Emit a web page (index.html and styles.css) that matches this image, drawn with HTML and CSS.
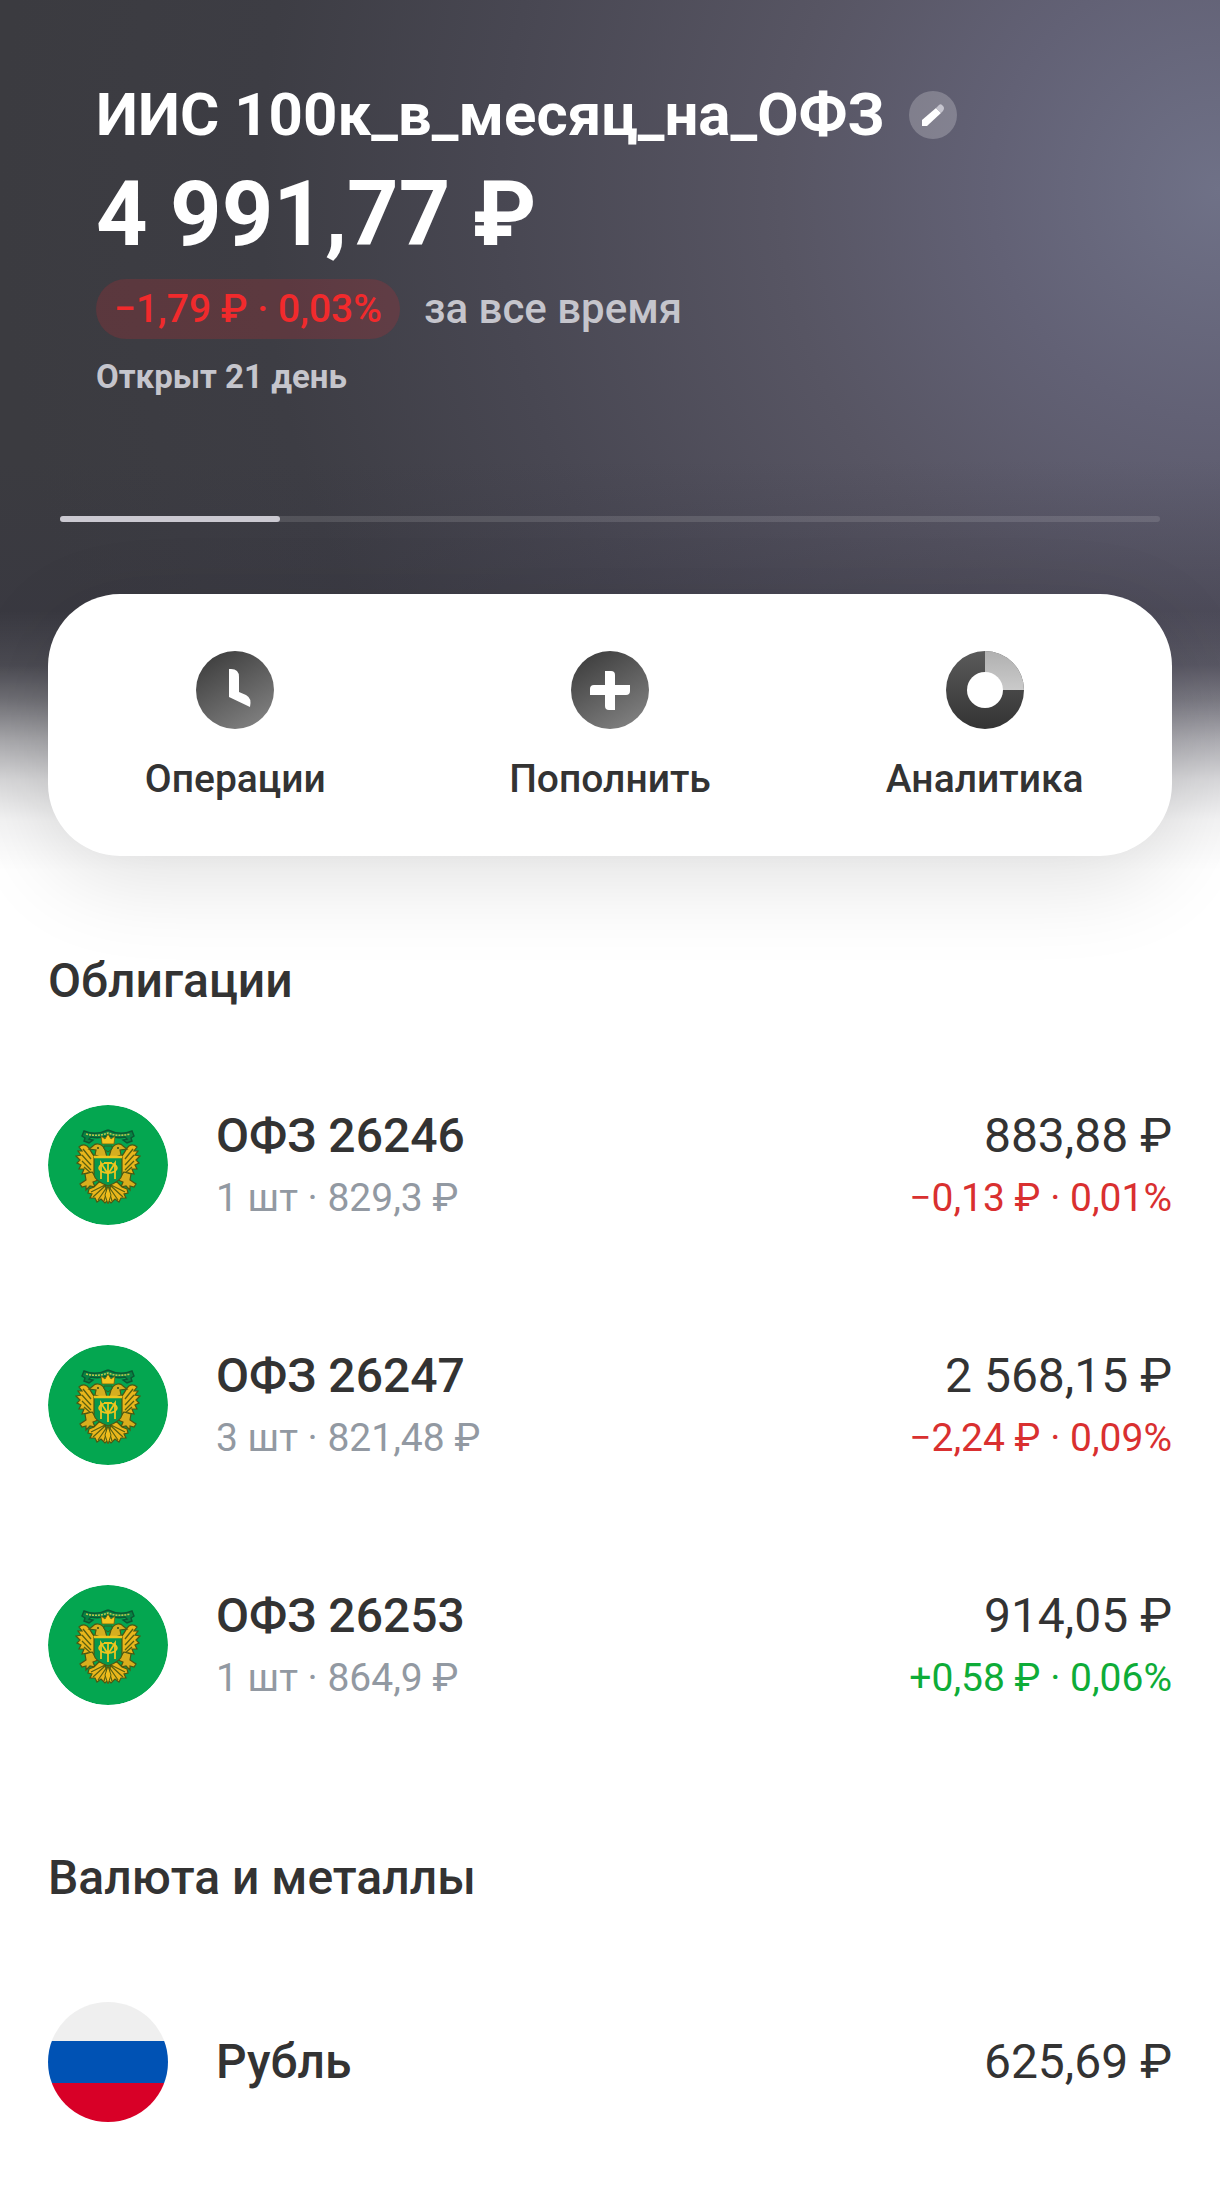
FILE: index.html
```html
<!DOCTYPE html>
<html lang="ru">
<head>
    <meta charset="UTF-8">
    <meta name="viewport" content="width=device-width, initial-scale=1.0">
    <title>ИИС 100к_в_месяц_на_ОФЗ</title>
    <link rel="stylesheet" href="styles.css">
</head>
<body>

    <!-- shared drawings -->
    <svg class="defs" width="0" height="0" aria-hidden="true">
        <defs>
            <linearGradient id="dark" x1="0.2" y1="0" x2="0.8" y2="1">
                <stop offset="0" stop-color="#3d3d3d"/>
                <stop offset="1" stop-color="#828282"/>
            </linearGradient>
            <linearGradient id="ring" x1="0" y1="0" x2="0" y2="1">
                <stop offset="0" stop-color="#5a5a5a"/>
                <stop offset="1" stop-color="#333333"/>
            </linearGradient>
            <linearGradient id="slice" x1="0" y1="0" x2="0" y2="1">
                <stop offset="0" stop-color="#b0b0b0"/>
                <stop offset="1" stop-color="#cacaca"/>
            </linearGradient>
        </defs>
        <symbol id="emblem" viewBox="0 0 120 120">
            <circle cx="60" cy="60" r="60" fill="#04a650"/>
            <g id="wing">
                <path d="M48 52 C44 51 43 44 39 41 C36 39 33 40 31 42 L34 46 L30 46 L33 50 L28 51 L32 55 L29 58 L33 60 L31 64 L36 64 L34 69 L40 68 L45 74 L49 70 Z" fill="#e9b61c" stroke="#4c5712" stroke-width="1.2"/>
                <path d="M35 44 L43 54 M34 50 L43 60 M34 56 L43 65 M36 62 L44 69" stroke="#59600f" stroke-width="1.3" fill="none"/>
                <path d="M59 52 L57 45 C55 39 48 37 45 41 L41 44 L48 45 L47 50 L55 53 Z" fill="#d5ae20" stroke="#4c5712" stroke-width="1.2"/>
                <circle cx="50" cy="43" r="1" fill="#2c4a18"/>
                <path d="M44 67 L37 69 L38 75 L32 79 L34 82 L38 81 L38 85 L42 81 L47 82 L45 77 L50 75 Z" fill="#d9ae1d" stroke="#4c5712" stroke-width="1.2"/>
                <path d="M57 78 L51 77 L46 82 L41 84 L40 88 L44 89 L42 93 L47 93 L49 97 L53 94 L57 98 L60 95 Z" fill="#e9b61c" stroke="#4c5712" stroke-width="1.2"/>
                <path d="M57 80 L43 87 M57 81 L45 92 M59 82 L50 95 M60 83 L56 96" stroke="#59600f" stroke-width="1.2" fill="none"/>
                <path d="M60 25 C52 29 43 29 36 26 L34 31 L37 33 L36 36 L41 38 L45 35 L41 34 L43 32 C50 34 56 32 60 31" fill="#078343" stroke="#0b5932" stroke-width="1.4"/>
            </g>
            <use href="#wing" transform="translate(120 0) scale(-1 1)"/>
            <path d="M38 29 Q50 32 60 28 Q70 32 82 29" fill="none" stroke="#b9c64a" stroke-width="1.6" stroke-dasharray="2 1"/>
            <path d="M54 39 L53 31 L57 34 L60 29 L63 34 L67 31 L66 39 Z" fill="#f4c61f" stroke="#665f10" stroke-width="0.8"/>
            <path d="M56 41 H64 V44 L60 47 L56 44 Z" fill="#07984c" stroke="#35601b" stroke-width="1"/>
            <path d="M46 52 H74 V70 Q73 76 60 81 Q47 76 46 70 Z" fill="#07984c" stroke="#4c5712" stroke-width="1.2"/>
            <path d="M46 52 H74" stroke="#edc41e" stroke-width="2.4"/>
            <path d="M53 74 V58 L60 69 L67 58 V74 M60 57 V77 M56 58 H64" fill="none" stroke="#edc41e" stroke-width="1.8"/>
            <ellipse cx="60" cy="63" rx="9" ry="5" fill="none" stroke="#edc41e" stroke-width="1.6"/>
            <path d="M60 81 L57 90 L60 99 L63 90 Z" fill="#f0bd1c" stroke="#59600f" stroke-width="1"/>
        </symbol>
    </svg>

    <header class="summary">
        <div class="title-row">
            <h1>ИИС 100к_в_месяц_на_ОФЗ</h1>
            <button class="edit" aria-label="Изменить название">
                <svg width="48" height="48" viewBox="0 0 48 48">
                    <path d="M13 35 V29 L27 17 L32 22 L18 35 Z" fill="#fff"/>
                    <path d="M27 17 L30 14 Q32 12 34 15 Q36 17 34 20 L32 22 Z" fill="#c6c5cf"/>
                </svg>
            </button>
        </div>
        <div class="balance">4 991,77 ₽</div>
        <div class="change-row">
            <span class="badge">−1,79 ₽ · 0,03%</span>
            <span class="period">за все время</span>
        </div>
        <div class="opened">Открыт 21 день</div>
    </header>

    <div class="progress"><div class="progress-fill"></div></div>

    <nav class="actions">
        <button class="action">
            <svg width="78" height="78" viewBox="0 0 78 78">
                <circle cx="39" cy="39" r="39" fill="url(#dark)"/>
                <path d="M33 18 H35 Q43 18 43 26 V41 L50 44 Q56 47 54 56 L33 46 Z" fill="#fff"/>
            </svg>
            Операции
        </button>
        <button class="action">
            <svg width="78" height="78" viewBox="0 0 78 78">
                <circle cx="39" cy="39" r="39" fill="url(#dark)"/>
                <path d="M34 20 H40 Q44 20 44 24 V34 H59 V40 Q59 44 55 44 H44 V59 H38 Q34 59 34 55 V44 H19 V38 Q19 34 23 34 H34 Z" fill="#fff"/>
            </svg>
            Пополнить
        </button>
        <button class="action">
            <svg width="78" height="78" viewBox="0 0 78 78">
                <circle cx="39" cy="39" r="39" fill="url(#ring)"/>
                <path d="M39 0 A39 39 0 0 1 78 39 H39 Z" fill="url(#slice)"/>
                <circle cx="39" cy="39" r="18" fill="#fff"/>
            </svg>
            Аналитика
        </button>
    </nav>

    <main>
        <section>
            <h2>Облигации</h2>
            <ul>
                <li>
                    <svg class="logo" viewBox="0 0 120 120"><use href="#emblem"/></svg>
                    <div class="info">
                        <div class="name">ОФЗ 26246</div>
                        <div class="detail">1 шт · 829,3 ₽</div>
                    </div>
                    <div class="value">
                        <div>883,88 ₽</div>
                        <div class="detail down">−0,13 ₽ · 0,01%</div>
                    </div>
                </li>
                <li>
                    <svg class="logo" viewBox="0 0 120 120"><use href="#emblem"/></svg>
                    <div class="info">
                        <div class="name">ОФЗ 26247</div>
                        <div class="detail">3 шт · 821,48 ₽</div>
                    </div>
                    <div class="value">
                        <div>2 568,15 ₽</div>
                        <div class="detail down">−2,24 ₽ · 0,09%</div>
                    </div>
                </li>
                <li>
                    <svg class="logo" viewBox="0 0 120 120"><use href="#emblem"/></svg>
                    <div class="info">
                        <div class="name">ОФЗ 26253</div>
                        <div class="detail">1 шт · 864,9 ₽</div>
                    </div>
                    <div class="value">
                        <div>914,05 ₽</div>
                        <div class="detail up">+0,58 ₽ · 0,06%</div>
                    </div>
                </li>
            </ul>
        </section>

        <section>
            <h2>Валюта и металлы</h2>
            <ul>
                <li>
                    <div class="logo flag"></div>
                    <div class="info">
                        <div class="name">Рубль</div>
                    </div>
                    <div class="value">
                        <div>625,69 ₽</div>
                    </div>
                </li>
            </ul>
        </section>
    </main>

</body>
</html>
```
FILE: styles.css
```css
* {
    box-sizing: border-box;
}

body {
    position: relative;
    margin: 0;
    background-color: #fff;
    color: #333;
    font-family: Roboto, "Liberation Sans", sans-serif;
}

/* dark backdrop that melts into the page under the card */
body::before {
    content: "";
    position: absolute;
    top: 0;
    left: 0;
    right: 0;
    height: 960px;
    z-index: -1;
    background:
        linear-gradient(to bottom, rgba(255, 255, 255, 0) 610px, rgba(255, 255, 255, 0.09) 665px, rgba(255, 255, 255, 0.28) 700px, rgba(255, 255, 255, 0.56) 740px, rgba(255, 255, 255, 0.8) 780px, rgba(255, 255, 255, 0.94) 820px, #fff 870px),
        linear-gradient(to bottom, rgba(54, 53, 66, 0) 460px, rgba(54, 53, 66, 0.4) 640px),
        radial-gradient(circle at 1220px 190px, #6f7187 0, #626175 230px, #575563 440px, #484752 720px, #3d3d44 960px, #3b3b40 1220px);
}

h1, h2, ul {
    margin: 0;
    padding: 0;
}

button {
    border: none;
    padding: 0;
    cursor: pointer;
    font-family: inherit;
}

.defs {
    position: absolute;
}

.summary {
    padding: 79px 96px 0;
    color: #fff;
}

.title-row {
    display: flex;
    align-items: center;
    gap: 24px;
}

h1 {
    font-size: 60px;
    line-height: 72px;
    font-weight: 700;
}

.edit {
    width: 48px;
    height: 48px;
    border-radius: 50%;
    background-color: rgba(255, 255, 255, 0.22);
}

.edit svg, .logo {
    display: block;
}

.balance {
    margin-top: 10px;
    font-size: 90px;
    line-height: 108px;
    font-weight: 700;
}

.change-row {
    display: flex;
    align-items: center;
    gap: 24px;
    margin-top: 10px;
}

.badge {
    padding: 0 18px;
    border-radius: 30px;
    background-color: rgba(232, 38, 44, 0.18);
    color: #f12a2c;
    font-size: 39px;
    line-height: 60px;
    font-weight: 500;
}

.period {
    color: #c5c5cc;
    font-size: 42px;
    line-height: 60px;
    font-weight: 500;
}

.opened {
    margin-top: 18px;
    color: #c5c5cc;
    font-size: 33px;
    line-height: 40px;
    font-weight: 700;
}

.progress {
    height: 6px;
    margin: 119px 60px 72px;
    border-radius: 3px;
    background-color: rgba(255, 255, 255, 0.12);
}

.progress-fill {
    width: 20%;
    height: 100%;
    border-radius: 3px;
    background-color: #cbc9d1;
}

.actions {
    display: flex;
    height: 262px;
    margin: 0 48px;
    border-radius: 72px;
    background-color: #fff;
    box-shadow: 0 24px 90px rgba(0, 0, 0, 0.12);
}

.action {
    flex: 1;
    display: flex;
    flex-direction: column;
    align-items: center;
    gap: 26px;
    padding-top: 57px;
    background: none;
    color: #333;
    font-size: 39px;
    line-height: 48px;
    font-weight: 500;
}

main {
    padding: 95px 48px 80px;
}

section + section {
    margin-top: 143px;
}

h2 {
    font-size: 48px;
    line-height: 60px;
    font-weight: 500;
}

ul {
    padding-top: 94px;
    list-style: none;
}

li {
    display: flex;
    align-items: center;
    height: 120px;
}

li + li {
    margin-top: 120px;
}

.logo {
    width: 120px;
    height: 120px;
    margin-right: 48px;
    border-radius: 50%;
}

.flag {
    background: linear-gradient(#efefef 39px, #0052b4 39px, #0052b4 81px, #d80027 81px);
}

.info {
    flex: 1;
}

.name, .value {
    font-size: 48px;
    line-height: 60px;
}

.name {
    font-weight: 500;
}

.value {
    text-align: right;
}

.detail {
    margin-top: 6px;
    color: #9299a2;
    font-size: 39px;
    line-height: 52px;
}

.down {
    color: #d93030;
}

.up {
    color: #0eac38;
}
```
